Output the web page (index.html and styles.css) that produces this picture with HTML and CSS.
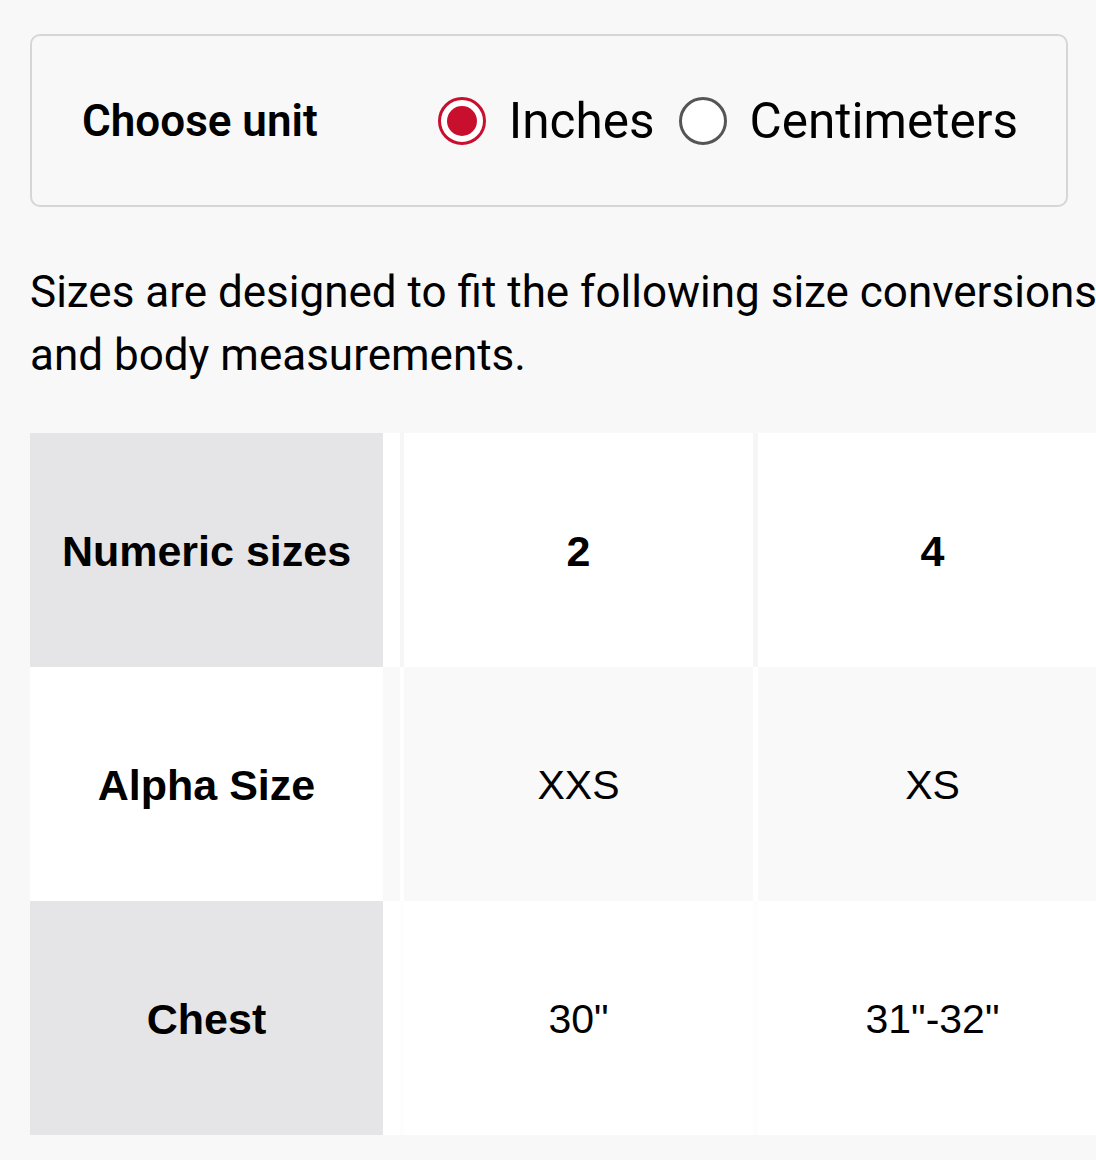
FILE: index.html
```html
<!DOCTYPE html>
<html lang="en">
<head>
<meta charset="utf-8">
<title>Size guide</title>
<link rel="stylesheet" href="styles.css">
</head>
<body>
<div class="page">
  <div class="unit-box">
    <span class="unit-label">Choose unit</span>
    <div class="unit-options">
      <label class="opt">
        <svg class="radio" width="48" height="48" viewBox="0 0 48 48" aria-hidden="true">
          <circle cx="24" cy="24" r="22.5" fill="#ffffff" stroke="#c8102e" stroke-width="3"/>
          <circle cx="24" cy="24" r="15" fill="#c8102e"/>
        </svg>
        <span>Inches</span>
      </label>
      <label class="opt">
        <svg class="radio" width="48" height="48" viewBox="0 0 48 48" aria-hidden="true">
          <circle cx="24" cy="24" r="22.5" fill="#ffffff" stroke="#555555" stroke-width="3"/>
        </svg>
        <span>Centimeters</span>
      </label>
    </div>
  </div>

  <p class="intro">Sizes are designed to fit the following size conversions and body measurements.</p>

  <div class="size-table">
    <div class="row row-a">
      <div class="cell label">Numeric sizes</div>
      <div class="spacer"></div>
      <div class="cell data strong">2</div>
      <div class="cell data strong">4</div>
    </div>
    <div class="row row-b">
      <div class="cell label">Alpha Size</div>
      <div class="spacer"></div>
      <div class="cell data">XXS</div>
      <div class="cell data">XS</div>
    </div>
    <div class="row row-c">
      <div class="cell label">Chest</div>
      <div class="spacer"></div>
      <div class="cell data">30"</div>
      <div class="cell data">31"-32"</div>
    </div>
  </div>
</div>
</body>
</html>
```

FILE: styles.css
```css
html, body {
  margin: 0;
  padding: 0;
  background: #f8f8f8;
  overflow: hidden;
}

body {
  font-family: Roboto, "Liberation Sans", sans-serif;
  color: #000000;
}

.page {
  padding: 34px 0 0 30px;
  width: 1200px;
  box-sizing: border-box;
}

.unit-box {
  width: 1038px;
  height: 173px;
  box-sizing: border-box;
  border: 2px solid #d6d6d6;
  border-radius: 10px;
  padding: 0 48px 0 50px;
  display: flex;
  align-items: center;
  justify-content: space-between;
}

.unit-label {
  font-size: 44px;
  font-weight: 600;
}

.unit-options {
  display: flex;
  align-items: center;
  gap: 24px;
}

.opt {
  display: flex;
  align-items: center;
  gap: 23px;
  font-size: 49.5px;
  font-weight: 400;
}

.radio {
  display: block;
  flex: none;
}

.intro {
  margin: 54px 0 46px;
  width: 1110px;
  font-size: 44px;
  line-height: 63px;
}

.size-table {
  font-family: "Liberation Sans", Arial, sans-serif;
}

.row {
  display: grid;
  grid-template-columns: 353px 17px 353px 354px;
  height: 234px;
}

.cell {
  display: flex;
  align-items: center;
  justify-content: center;
  font-size: 41px;
  padding-top: 3px;
  box-sizing: border-box;
}

.label,
.strong {
  font-weight: 700;
  font-size: 43px;
}

.data {
  border-left: 4px solid #f6f6f6;
}

.data + .data {
  border-left-width: 5px;
}

.row-a,
.row-c {
  background: #ffffff;
}

.row-a .label,
.row-c .label {
  background: #e5e5e7;
}

.row-c .data {
  border-left-color: #fdfdfd;
}

.row-b {
  background: #f9f9f9;
}

.row-b .label {
  background: #ffffff;
}

.row-b .data {
  border-left-color: #ffffff;
}
```
